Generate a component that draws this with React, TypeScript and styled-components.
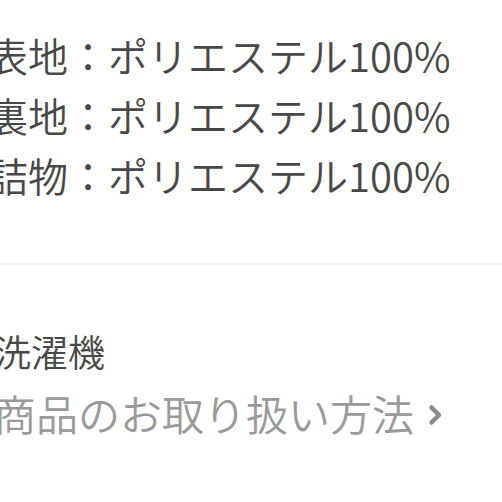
import styled, { createGlobalStyle } from "styled-components";

const GlobalStyle = createGlobalStyle`
  html, body {
    margin: 0;
    padding: 0;
    background: #ffffff;
  }
  body {
    font-family: "Noto Sans CJK JP", "Noto Sans", sans-serif;
    overflow: hidden;
  }
`;

const Page = styled.div`
  width: 502px;
  height: 502px;
  overflow: hidden;
  background: #ffffff;
`;

const Materials = styled.ul`
  list-style: none;
  margin: 0 0 0 -12px;
  padding: 25px 0 58px;
`;

const MaterialRow = styled.li`
  font-size: 40px;
  font-weight: 350;
  line-height: 60px;
  color: #484848;
  white-space: nowrap;
`;

const Divider = styled.hr`
  margin: 0;
  border: none;
  height: 2px;
  background: #f2f2f2;
`;

const Care = styled.section`
  padding: 59px 0 0;
  margin-left: -6px;
  display: flex;
  flex-direction: column;
  gap: 6px;
`;

const CareLabel = styled.div`
  font-size: 37px;
  font-weight: 350;
  line-height: 54px;
  color: #484848;
  white-space: nowrap;
`;

const CareLink = styled.a`
  display: flex;
  align-items: center;
  gap: 14px;
  font-size: 42px;
  font-weight: 350;
  line-height: 58px;
  color: #9a9a9a;
  text-decoration: none;
  white-space: nowrap;
`;

const Chevron = styled.svg`
  width: 15px;
  height: 22px;
  margin-top: 4px;
`;

const materials = ["表地", "裏地", "詰物"];

export default function App() {
  return (
    <Page>
      <GlobalStyle />
      <Materials>
        {materials.map((m) => (
          <MaterialRow key={m}>{m}：ポリエステル100%</MaterialRow>
        ))}
      </Materials>
      <Divider />
      <Care>
        <CareLabel>洗濯機</CareLabel>
        <CareLink href="#">
          商品のお取り扱い方法
          <Chevron viewBox="0 0 15 22">
            <path
              d="M3.5 3.5 L11 11 L3.5 18.5"
              fill="none"
              stroke="#8a8a8a"
              strokeWidth="4.5"
              strokeLinecap="round"
              strokeLinejoin="round"
            />
          </Chevron>
        </CareLink>
      </Care>
    </Page>
  );
}
